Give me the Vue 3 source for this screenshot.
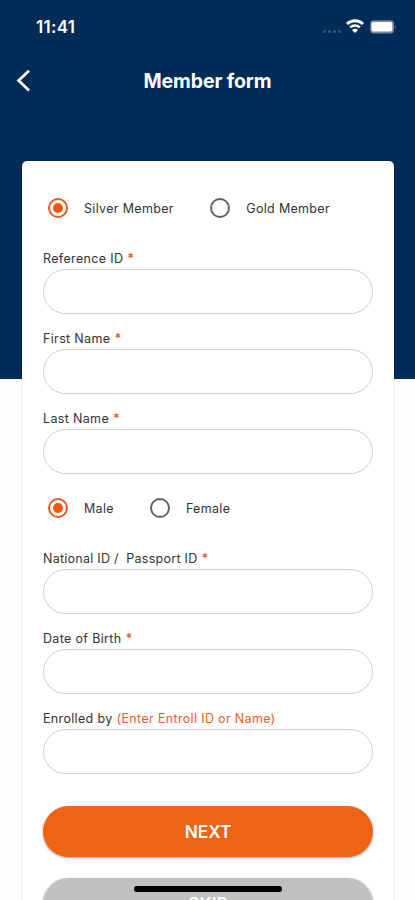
<script setup>
import { ref } from 'vue'

const membership = ref('Silver Member')
const gender = ref('Male')

const personalFields = [
  { label: 'Reference ID' },
  { label: 'First Name' },
  { label: 'Last Name' },
]
const identityFields = [
  { label: 'National ID /\u00a0 Passport ID', tight: true },
  { label: 'Date of Birth' },
  { label: 'Enrolled by', hint: '(Enter Entroll ID or Name)' },
]
</script>

<template>
  <div class="screen">
    <header class="hero">
      <div class="status">
        <span class="time">11:41</span>
        <div class="indicators">
          <div class="dots"><i v-for="n in 4" :key="n"></i></div>
          <svg class="wifi" width="18" height="14" viewBox="0 0 18 14">
            <path d="M1 5C5.5.7 12.5.7 17 5" fill="none" stroke="#fff" stroke-width="2.9" />
            <path d="M4.1 8.4c2.8-2.6 7-2.6 9.8 0" fill="none" stroke="#fff" stroke-width="2.5" />
            <path d="M9 14 6 10.9c1.7-1.6 4.3-1.6 6 0z" fill="#fff" />
          </svg>
          <svg class="battery" width="27" height="14" viewBox="0 0 27 14">
            <rect x=".2" y=".2" width="23.8" height="13.2" rx="3.5" fill="#7486a0" />
            <rect x="1.5" y="2" width="20.8" height="9.6" rx="1.8" fill="#fff" />
            <path d="M24.8 5v3.8c1.5-.6 1.5-3.2 0-3.8z" fill="#7486a0" />
          </svg>
        </div>
      </div>
      <nav class="bar">
        <svg class="back" width="16" height="24" viewBox="0 0 16 24">
          <path d="M14 1.8 3.6 11.6 14 21.4" fill="none" stroke="#fff" stroke-width="2.8" />
        </svg>
        <h1>Member form</h1>
      </nav>
    </header>

    <main class="card">
      <div class="radios membership">
        <label v-for="m in ['Silver Member', 'Gold Member']" :key="m" class="radio" @click="membership = m">
          <span class="ring" :class="{ on: membership === m }"></span>
          <span>{{ m }}</span>
        </label>
      </div>
      <div v-for="f in personalFields" :key="f.label" class="field">
        <label><span>{{ f.label }}</span><b>*</b></label>
        <input type="text" />
      </div>
      <div class="radios gender">
        <label v-for="g in ['Male', 'Female']" :key="g" class="radio" @click="gender = g">
          <span class="ring" :class="{ on: gender === g }"></span>
          <span>{{ g }}</span>
        </label>
      </div>
      <div v-for="f in identityFields" :key="f.label" class="field">
        <label><span :class="{ tight: f.tight }">{{ f.label }}</span><em v-if="f.hint">{{ f.hint }}</em><b v-else>*</b></label>
        <input type="text" />
      </div>
      <button class="btn next">NEXT</button>
      <button class="btn skip">SKIP</button>
    </main>
    <div class="home"></div>
  </div>
</template>

<style>
body {
  background: #fff;
}
</style>

<style scoped>
.screen {
  position: relative;
  width: 415px;
  height: 900px;
  overflow: hidden;
  background: #fefefe;
  font-family: Inter, 'Liberation Sans', sans-serif;
  color: #333;
}
.hero {
  box-sizing: border-box;
  height: 379px;
  background: #002c57;
  color: #fff;
}
.status {
  display: flex;
  justify-content: space-between;
  box-sizing: border-box;
  height: 54px;
  padding: 17px 18.5px 0 36px;
}
.time {
  font-size: 17px;
  line-height: 21px;
  font-weight: 600;
  letter-spacing: 0.3px;
}
.indicators {
  display: flex;
  align-items: flex-start;
  padding-top: 2px;
}
.dots {
  display: flex;
  gap: 2px;
  padding: 11px 5px 0 0;
}
.dots i {
  width: 3px;
  height: 3px;
  border-radius: 50%;
  background: #34567a;
}
.wifi {
  margin-right: 6px;
}
.battery {
  margin-top: 1px;
}
.bar {
  display: grid;
  grid-template-columns: 72px 1fr 72px;
  align-items: center;
  height: 54px;
}
.back {
  margin-left: 15px;
}
h1 {
  margin: 0;
  text-align: center;
  font-size: 19.5px;
  line-height: 24px;
  font-weight: 700;
  letter-spacing: -0.1px;
}
.card {
  position: relative;
  box-sizing: border-box;
  width: 372.5px;
  height: 800px;
  margin: -218px 0 0 21.5px;
  padding: 0 21.5px;
  border-radius: 5px;
  background: #fff;
  box-shadow: 0 0 2px rgba(0, 0, 0, 0.28);
}
.radios {
  display: flex;
  align-items: center;
  box-sizing: border-box;
  padding-left: 5px;
}
.membership {
  height: 73px;
  padding-top: 21px;
  gap: 36.5px;
}
.gender {
  height: 60px;
  padding-top: 8px;
  gap: 36px;
}
.radio {
  display: flex;
  align-items: center;
  gap: 16px;
  font-size: 12.5px;
  line-height: 18px;
  letter-spacing: 0.32px;
}
.ring {
  display: grid;
  place-items: center;
  box-sizing: border-box;
  width: 20px;
  height: 20px;
  border: 2px solid #626262;
  border-radius: 50%;
}
.ring + span {
  padding-top: 1px;
}
.ring.on {
  border-color: #ed5a1c;
}
.ring.on::after {
  content: '';
  width: 10px;
  height: 10px;
  border-radius: 50%;
  background: #ed570f;
}
.field {
  display: flex;
  flex-direction: column;
  gap: 3px;
  box-sizing: border-box;
  height: 80px;
  padding-top: 16px;
}
.field label {
  display: flex;
  gap: 4px;
  height: 16px;
  font-size: 12.5px;
  line-height: 18px;
  letter-spacing: 0.34px;
  white-space: nowrap;
}
.field .tight {
  letter-spacing: 0.26px;
}
.field b {
  font-weight: 700;
  color: #f1602c;
}
.field em {
  font-style: normal;
  color: #f25a2b;
}
.field input {
  box-sizing: border-box;
  width: 330px;
  height: 45px;
  padding: 0 20px;
  border: 1px solid #cfcfcf;
  border-radius: 23px;
  background: #fff;
  outline: none;
  font: inherit;
}
.btn {
  display: block;
  width: 330px;
  height: 51px;
  padding: 0;
  border: 0;
  border-radius: 26px;
  color: #fff;
  font-family: inherit;
  font-size: 17.3px;
  font-weight: 600;
  box-shadow: 0 1px 3px rgba(0, 0, 0, 0.35);
}
.next {
  margin-top: 31.5px;
  background: #ef6314;
}
.skip {
  margin-top: 21.5px;
  background: #c1c1c1;
}
.home {
  position: absolute;
  left: 134px;
  top: 886px;
  width: 148px;
  height: 6px;
  border-radius: 3px;
  background: #000;
}
</style>
